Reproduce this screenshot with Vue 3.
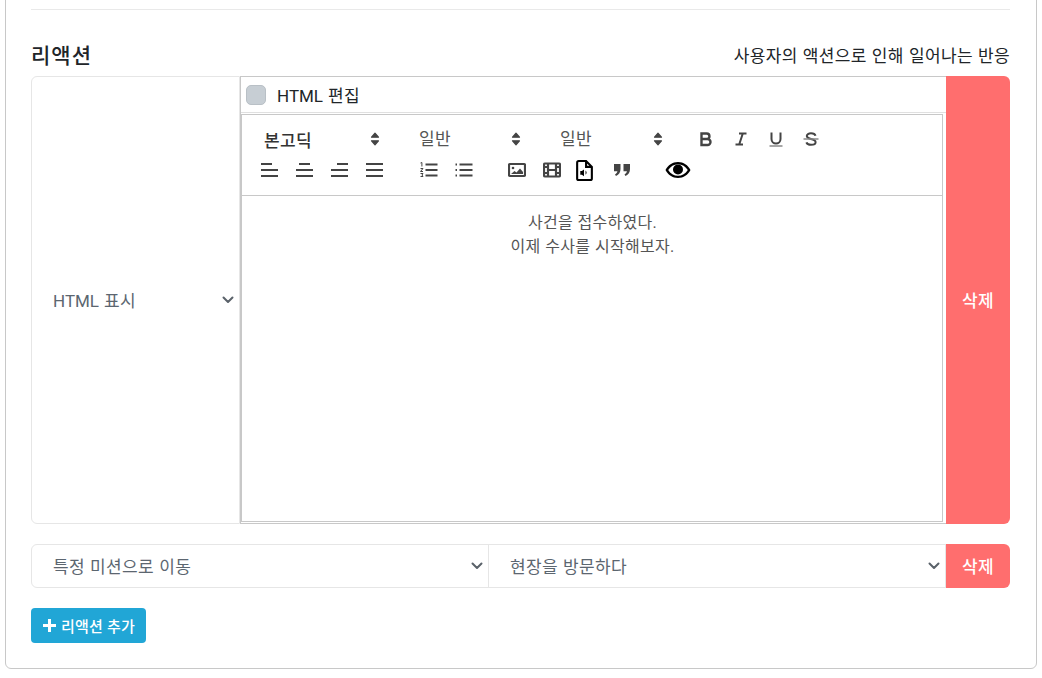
<script setup>
const alignIcons = [
  ['M0 1h11', 'M0 7h17', 'M0 13h17'],
  ['M3 1h11', 'M0 7h17', 'M0 13h17'],
  ['M6 1h11', 'M0 7h17', 'M0 13h17'],
  ['M0 1h17', 'M0 7h17', 'M0 13h17']
]
</script>

<template>
  <div class="card">
    <hr class="divider" />

    <div class="section-head">
      <h3>리액션</h3>
      <span class="section-desc">사용자의 액션으로 인해 일어나는 반응</span>
    </div>

    <div class="reaction-row tall">
      <div class="select first">
        <span><span class="latin">HTML</span> 표시</span>
        <svg class="chevron" viewBox="0 0 12 8" aria-hidden="true"><path d="M1.500 1.500L6 6l4.500-4.500" /></svg>
      </div>

      <div class="editor-col">
        <label class="html-toggle">
          <span class="checkbox"></span>
          <span><span class="latin">HTML</span> 편집</span>
        </label>
        <div class="editor">
          <div class="toolbar">
            <div class="tool-line">
              <span class="picker font-picker bold">본고딕<svg class="updown" viewBox="0 0 8 12"><path d="M4 1L7 4.500H1zM4 11L1 7.500h6z" /></svg></span>
              <span class="picker size-one">일반<svg class="updown" viewBox="0 0 8 12"><path d="M4 1L7 4.500H1zM4 11L1 7.500h6z" /></svg></span>
              <span class="picker size-two">일반<svg class="updown" viewBox="0 0 8 12"><path d="M4 1L7 4.500H1zM4 11L1 7.500h6z" /></svg></span>
              <span class="format-group">
                <svg class="tool" viewBox="0 0 16 16"><path class="stroke bold-stroke" d="M3.500 2.500h5.200a2.700 2.700 0 0 1 0 5.500H3.500zM3.500 8h6a3 3 0 0 1 0 6h-6z" /></svg>
                <svg class="tool" viewBox="0 0 16 16"><path class="stroke thin" d="M6 2.500h7.500M2.500 13.500H10M9.800 2.500L6.200 13.500" /></svg>
                <svg class="tool" viewBox="0 0 16 16"><path class="stroke thin" d="M3.500 1.500v6.500a4.500 4.500 0 0 0 9 0V1.500" /><path class="stroke faint" d="M1.500 15h13" /></svg>
                <svg class="tool" viewBox="0 0 16 16"><path class="stroke thin" d="M12.500 4.800C12 3.100 10.200 2.300 8 2.300 5.600 2.300 3.800 3.400 3.800 5c0 1.300 1.100 2.200 4.200 3 3.200.8 4.600 1.800 4.600 3.200 0 1.700-2 2.600-4.600 2.600-2.300 0-4-.8-4.600-2.500" /><path class="stroke faint" d="M0.500 8h15" /></svg>
              </span>
            </div>
            <div class="tool-line">
              <span class="align-group">
                <svg v-for="(lines, i) in alignIcons" :key="i" class="align" viewBox="0 0 17 14"><path v-for="d in lines" :key="d" class="stroke thin" :d="d" /></svg>
              </span>
              <span class="list-group">
                <svg class="align" viewBox="0 0 18 16"><path class="stroke thin" d="M6 2.500h12M6 8h12M6 13.500h12" /><path class="stroke hair" d="M1 1l1.400-.5v4M1 6.500h2.500L1 9.500h2.500M1 11.500h2.500l-1 1.500 1 1.500H1" /></svg>
                <svg class="align" viewBox="0 0 18 16"><path class="stroke thin" d="M5 2.500h13M5 8h13M5 13.500h13" /><path class="stroke thin" d="M1 2.500h1.500M1 8h1.500M1 13.500h1.500" /></svg>
              </span>
              <span class="media-group">
                <svg class="media" viewBox="0 0 18 16"><rect class="stroke" x="1" y="2" width="16" height="12" rx="1" /><circle cx="5" cy="6" r="1.300" class="fill" /><path class="fill" d="M3 12l3.500-3 2 1.500 3.500-4 3 3.500V12z" /></svg>
                <svg class="media" viewBox="0 0 18 16"><rect class="stroke" x="1" y="1.500" width="16" height="13" rx="1" /><path class="stroke" d="M5 1.500v13M13 1.500v13M5 8h8M1 5h4M1 11h4M13 5h4M13 11h4" /></svg>
                <svg class="doc" viewBox="0 0 16 20"><path class="black-stroke" d="M2.500 1h7L15 6.500V17.500a1.500 1.500 0 0 1-1.500 1.500h-11A1.500 1.500 0 0 1 1 17.500V2.500A1.500 1.500 0 0 1 2.500 1zM9.500 1v5.500H15" /><path class="black-fill" d="M4 10.500h1.500L7.500 9v6.500l-2-1.500H4zM9 10a2.500 2.500 0 0 1 0 4z" /></svg>
                <svg class="quote" viewBox="0 0 18 14"><path class="fill" d="M1 1h6.500v5c0 3.300-1.500 5.800-4.500 7l-1-1.500c1.400-.7 2.200-1.800 2.400-3.200H1zM10.500 1H17v5c0 3.300-1.500 5.800-4.500 7l-1-1.500c1.400-.7 2.200-1.800 2.400-3.200h-3.400z" /></svg>
              </span>
              <svg class="eye" viewBox="0 0 26 16"><path class="black-fill" fill-rule="evenodd" d="M13 0C7.500 0 3 3.200 .5 8 3 12.800 7.500 16 13 16s10-3.200 12.500-8C23 3.200 18.500 0 13 0zM13 2.200c4.100 0 7.600 2.200 9.800 5.800-2.200 3.600-5.700 5.800-9.800 5.800S5.400 11.600 3.200 8C5.400 4.400 8.900 2.200 13 2.200z" /><circle class="black-fill" cx="13" cy="7.500" r="5" /></svg>
            </div>
          </div>
          <div class="content">
            <p>사건을 접수하였다.</p>
            <p>이제 수사를 시작해보자.</p>
          </div>
        </div>
      </div>

      <button class="delete" type="button">삭제</button>
    </div>

    <div class="reaction-row short">
      <div class="select first half">
        <span>특정 미션으로 이동</span>
        <svg class="chevron" viewBox="0 0 12 8" aria-hidden="true"><path d="M1.500 1.500L6 6l4.500-4.500" /></svg>
      </div>
      <div class="select half second">
        <span>현장을 방문하다</span>
        <svg class="chevron" viewBox="0 0 12 8" aria-hidden="true"><path d="M1.500 1.500L6 6l4.500-4.500" /></svg>
      </div>
      <button class="delete" type="button">삭제</button>
    </div>

    <button class="add" type="button">
      <svg viewBox="0 0 13 13" aria-hidden="true"><path d="M6.500 0v13M0 6.500h13" /></svg>
      리액션 추가
    </button>
  </div>
</template>

<style>
html, body {
  margin: 0;
  height: 678px;
  overflow: hidden;
  background: #fff;
}
</style>

<style scoped>
.card {
  box-sizing: border-box;
  width: 1032px;
  height: 690px;
  margin: -21px 0 0 5px;
  padding: 29px 26px 0 25px;
  border: 1px solid #c8c8c8;
  border-radius: 6px;
  font-family: Roboto, "Noto Sans CJK KR", sans-serif;
  font-size: 17px;
  letter-spacing: 0.36px;
  word-spacing: 0.5px;
  color: #212529;
}

.latin {
  font-size: 17px;
  letter-spacing: 0;
}

.divider {
  height: 1px;
  margin: 0;
  border: none;
  background: #e9e9e9;
}

.section-head {
  display: flex;
  align-items: center;
  justify-content: space-between;
  height: 24px;
  margin-top: 32px;
  margin-bottom: 10px;
}

.section-head h3 {
  margin: 0;
  font-size: 21px;
  font-weight: 500;
  letter-spacing: 1px;
  color: #212529;
}

.reaction-row {
  display: flex;
  width: 979px;
}

.tall {
  height: 448px;
}

.short {
  height: 44px;
  margin-top: 20px;
}

.select {
  box-sizing: border-box;
  display: flex;
  align-items: center;
  justify-content: space-between;
  padding: 0 5px 2px 21px;
  border: 1px solid #e6e6e6;
  background: #fff;
  color: #5c6670;
}

.select .chevron {
  position: relative;
  top: 1px;
}

.first {
  flex: none;
  width: 209px;
  border-radius: 6px 0 0 6px;
}

.half {
  width: 458px;
}

.second {
  margin-left: -1px;
  border-radius: 0;
}

.chevron {
  width: 12px;
  height: 8px;
  fill: none;
  stroke: #5a626a;
  stroke-width: 2;
  stroke-linecap: round;
  stroke-linejoin: round;
}

.editor-col {
  box-sizing: border-box;
  flex: none;
  width: 706px;
  display: flex;
  flex-direction: column;
  border: 1px solid #c8c8c8;
  border-right: none;
}

.html-toggle {
  display: flex;
  align-items: center;
  gap: 11px;
  height: 35px;
  padding-left: 5px;
  border-bottom: 1px solid #e0e0e0;
}

.checkbox {
  box-sizing: border-box;
  width: 20px;
  height: 20px;
  border: 1px solid #b9c0c6;
  border-radius: 5px;
  background: #c7ced4;
}

.editor {
  flex: 1;
  display: flex;
  flex-direction: column;
  margin: 1px 3px 1px 0;
  border: 1px solid #c8c8c8;
}

.toolbar {
  box-sizing: border-box;
  height: 81px;
  padding: 9px 0 0 19px;
  border-bottom: 1px solid #c8c8c8;
}

.tool-line {
  display: flex;
  align-items: center;
  height: 30px;
}

.tool-line + .tool-line {
  margin-top: 1px;
}

.picker {
  display: flex;
  align-items: center;
  justify-content: space-between;
  flex: none;
  color: #555;
}

.picker.bold {
  width: 116px;
  padding-left: 3px;
  font-weight: 500;
  color: #333;
}

.size-one {
  box-sizing: border-box;
  width: 102px;
  margin-left: 39px;
  position: relative;
  top: -2px;
}

.size-two {
  box-sizing: border-box;
  width: 103px;
  margin-left: 39px;
  position: relative;
  top: -2px;
}

.updown {
  width: 10px;
  height: 14px;
  fill: #444;
  stroke: #444;
  stroke-width: 1;
  stroke-linejoin: round;
}

.size-one .updown,
.size-two .updown {
  position: relative;
  top: 2px;
}

.format-group {
  display: flex;
  gap: 19px;
  margin-left: 35px;
}

.tool {
  width: 16px;
  height: 16px;
}

.stroke {
  fill: none;
  stroke: #444;
  stroke-width: 2.200;
}

.stroke.bold-stroke {
  stroke-width: 2.400;
}

.stroke.thin {
  stroke-width: 2;
}

.stroke.hair {
  stroke-width: 1;
}

.stroke.faint {
  stroke-width: 1.500;
  stroke: #888;
}

.fill {
  fill: #444;
}

.black-stroke {
  fill: none;
  stroke: #000;
  stroke-width: 2;
}

.black-fill {
  fill: #000;
}

.align-group {
  display: flex;
  gap: 18px;
}

.align {
  width: 17px;
  height: 14px;
}

.list-group {
  display: flex;
  gap: 16px;
  margin-left: 36px;
}

.list-group .align {
  width: 19px;
  height: 16px;
}

.media-group {
  display: flex;
  align-items: center;
  gap: 17px;
  margin-left: 35px;
}

.media {
  width: 18px;
  height: 16px;
}

.doc {
  width: 17px;
  height: 21px;
  margin-left: -2px;
}

.quote {
  width: 18px;
  height: 14px;
  margin-left: 3px;
}

.eye {
  width: 26px;
  height: 16px;
  margin-left: 34px;
}

.content {
  padding: 15px 0 0 1px;
  text-align: center;
  font-size: 16px;
  letter-spacing: 0.28px;
  line-height: 24px;
  color: #555;
}

.content p {
  margin: 0;
}

.delete {
  flex: 1;
  border: none;
  padding: 0 0 2px;
  border-radius: 0 6px 6px 0;
  background: #ff6e6e;
  color: #fff;
  font: 500 17px Roboto, "Noto Sans CJK KR", sans-serif;
  letter-spacing: 0.36px;
}

.add {
  display: flex;
  align-items: center;
  gap: 5px;
  width: 115px;
  height: 35px;
  margin-top: 20px;
  padding: 0 0 0 12px;
  border: none;
  border-radius: 4px;
  background: #21a6d6;
  color: #fff;
  font: 500 15px Roboto, "Noto Sans CJK KR", sans-serif;
  letter-spacing: 0.2px;
}

.add svg {
  width: 13px;
  height: 13px;
  fill: none;
  stroke: #fff;
  stroke-width: 3;
}
</style>
